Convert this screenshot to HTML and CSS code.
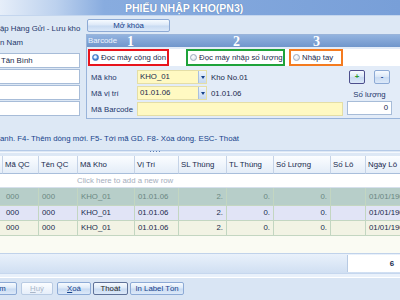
FILE: index.html
```html
<!DOCTYPE html>
<html lang="vi">
<head>
    <meta charset="UTF-8">
    <meta name="viewport" content="width=device-width, initial-scale=1.0">
    <title>Phiếu nhập kho</title>
    <link rel="stylesheet" href="styles.css">
</head>
<body>

    <div class="title">PHIẾU NHẬP KHO(PN3)</div>

    <div class="top">
        <div class="left">
            <div class="lbl">ập Hàng Gửi - Lưu kho</div>
            <div class="lbl">n Nam</div>
            <div class="box">Tân Bình</div>
            <div class="box"></div>
            <div class="box"></div>
            <div class="box"></div>
        </div>

        <div class="right">
            <div class="btn unlock">Mở khóa</div>
            <div class="group">
                <div class="group-head">
                    <span class="cap">Barcode</span>
                    <span class="num n1">1</span>
                    <span class="num n2">2</span>
                    <span class="num">3</span>
                </div>
                <div class="modes">
                    <div class="mode red"><i class="radio on"></i>Đọc máy cộng dồn</div>
                    <div class="mode green"><i class="radio"></i>Đọc máy nhập số lượng</div>
                    <div class="mode orange"><i class="radio"></i>Nhập tay</div>
                </div>
                <div class="body">
                    <div class="fields">
                        <div class="row">
                            <span class="rl">Mã kho</span>
                            <div class="combo"><span>KHO_01</span><i class="drop"></i></div>
                            <span class="desc">Kho No.01</span>
                        </div>
                        <div class="row">
                            <span class="rl">Mã vị trí</span>
                            <div class="combo"><span>01.01.06</span><i class="drop"></i></div>
                            <span class="desc">01.01.06</span>
                        </div>
                        <div class="row">
                            <span class="rl">Mã Barcode</span>
                            <div class="yellow"></div>
                        </div>
                    </div>
                    <div class="qty">
                        <div class="pm">
                            <div class="btn sq plus">+</div>
                            <div class="btn sq">-</div>
                        </div>
                        <div class="ql">Số lượng</div>
                        <div class="qbox">0</div>
                    </div>
                </div>
            </div>
        </div>
    </div>

    <div class="hint">anh. F4- Thêm dòng mới. F5- Tới mã GD. F8- Xóa dòng. ESC- Thoát</div>

    <div class="split"><span class="grip"></span></div>

    <div class="grid">
        <div class="ghead">
            <div></div>
            <div>Mã QC</div>
            <div>Tên QC</div>
            <div>Mã Kho</div>
            <div>Vị Trí</div>
            <div>SL Thùng</div>
            <div>TL Thùng</div>
            <div>Số Lượng</div>
            <div>Số Lô</div>
            <div>Ngày Lô</div>
        </div>
        <div class="newrow">Click here to add a new row</div>
        <div class="grow sel">
            <div></div><div>000</div><div>000</div><div>KHO_01</div><div>01.01.06</div>
            <div class="n">2.</div><div class="n">0.</div><div class="n">0.</div><div></div><div>01/01/190</div>
        </div>
        <div class="grow alt">
            <div></div><div>000</div><div>000</div><div>KHO_01</div><div>01.01.06</div>
            <div class="n">2.</div><div class="n">0.</div><div class="n">0.</div><div></div><div>01/01/190</div>
        </div>
        <div class="grow even">
            <div></div><div>000</div><div>000</div><div>KHO_01</div><div>01.01.06</div>
            <div class="n">2.</div><div class="n">0.</div><div class="n">0.</div><div></div><div>01/01/190</div>
        </div>
    </div>

    <div class="sum"><div class="total">6</div></div>

    <div class="bar">
        <div class="btn tb first">Tìm</div>
        <div class="btn tb off"><u>H</u>uỷ</div>
        <div class="btn tb"><u>X</u>oá</div>
        <div class="btn tb focus">Thoát</div>
        <div class="btn tb">In Label Tồn</div>
    </div>

</body>
</html>
```

FILE: styles.css
```css
* { box-sizing: border-box; }
html, body { margin: 0; padding: 0; }
body { width: 400px; height: 300px; overflow: hidden; background: #dde8f5; font-family: "Liberation Sans", Arial, sans-serif; font-size: 7.8px; color: #172a4c; }

.title { height: 16px; padding-left: 125px; line-height: 16px; font-size: 10.5px; font-weight: bold; color: #fff; white-space: nowrap; background: linear-gradient(90deg, #e6eef9 0, #bcd1ee 14%, #88acdf 26%, #789fd8 100%); text-shadow: 0 0 1px #4a70a8; border-bottom: 1px solid #c4d6ee; }

.top { display: flex; gap: 6px; height: 103px; }
.left { flex: none; width: 80px; padding-top: 6px; }
.lbl { line-height: 14px; white-space: nowrap; color: #1c366a; }
.box { width: 82px; height: 15px; margin: 0 0 1px -2px; padding-left: 2px; line-height: 13px; background: #fff; border: 1px solid #a7bcd8; }
.lbl + .box { margin-top: 3px; }

.right { flex: none; width: 330px; }
.btn { border: 1px solid #8daad5; border-radius: 2px; background: linear-gradient(#f7fbff, #dde9f8 45%, #c9dbf2 55%, #dce9f9); color: #15428b; text-align: center; white-space: nowrap; }
.unlock { width: 83px; height: 13px; margin: 3px 0 0 1px; line-height: 11px; }

.group { height: 85px; margin-top: 2px; border: 1px solid #99b4da; background: #e3ecf8; }
.group-head { display: flex; height: 12px; line-height: 12px; background: linear-gradient(#93b3df, #7096cc); color: #eef4fc; }
.cap { width: 40px; padding-left: 1px; }
.num { font-family: "Liberation Serif", serif; font-weight: bold; font-size: 14px; line-height: 13px; color: #fff; }
.n1 { width: 106px; }
.n2 { width: 80px; }

.modes { display: flex; height: 17px; margin: 2px 0 0 1px; background: #fff; }
.mode { display: flex; align-items: center; gap: 2px; height: 17px; padding-left: 2px; border: 2px solid; white-space: nowrap; }
.red { width: 81px; border-color: #e8141c; }
.green { width: 99px; margin-left: 17px; border-color: #1fa33a; }
.orange { width: 54px; margin-left: 4px; border-color: #f47b20; }
.radio { flex: none; width: 7px; height: 7px; border-radius: 50%; border: 1px solid #9aa9bd; background: radial-gradient(circle at 40% 35%, #fff, #d3dbe6); }
.radio.on { border-color: #3f78c4; background: radial-gradient(circle at 45% 40%, #eaf4ff 0 25%, #4d8fdc 55%, #2a62b0); }

.body { display: flex; margin-top: 4px; }
.fields { display: flex; flex-direction: column; gap: 2px; width: 259px; }
.row { display: flex; align-items: center; height: 14px; }
.rl { width: 50px; padding-left: 4px; color: #1c366a; white-space: nowrap; }
.combo { display: flex; width: 70px; height: 14px; background: #fff9c2; border: 1px solid #e4dea6; }
.combo span { flex: 1; padding-left: 2px; line-height: 12px; }
.drop { display: flex; align-items: center; justify-content: center; width: 8px; background: linear-gradient(#edf4fd, #c5d8f1); border-left: 1px solid #a9c0df; }
.drop::after { content: ""; border-top: 3px solid #15428b; border-left: 2px solid transparent; border-right: 2px solid transparent; }
.desc { padding-left: 4px; white-space: nowrap; }
.yellow { width: 206px; height: 14px; background: #fff9c2; border: 1px solid #e4dea6; }

.qty { width: 45px; margin-left: 1px; }
.pm { display: flex; gap: 9px; padding-left: 2px; }
.sq { width: 16px; height: 14px; line-height: 12px; font-weight: bold; }
.plus { border-color: #4d4f8d; color: #2c9a2c; }
.ql { height: 17px; padding-top: 5px; line-height: 12px; text-align: center; color: #1c366a; white-space: nowrap; }
.qbox { height: 14px; padding-right: 3px; line-height: 12px; text-align: right; background: #fff; border: 1px solid #a7bcd8; }

.hint { margin-top: 14px; line-height: 12px; color: #15428b; white-space: nowrap; }

.split { height: 3px; margin: 5px 0 3px; border-top: 1px solid #b5cae7; border-bottom: 1px solid #f4f8fd; }
.grip { display: block; width: 12px; height: 1px; margin-left: 150px; background: repeating-linear-gradient(90deg, #5d7fb5 0 1px, transparent 1px 3px); }

.grid { height: 97px; background: #fafbf3; }
.ghead, .grow { display: grid; grid-template-columns: 3px 36px 39px 57px 44px 48px 47px 57px 35px 60px; }
.ghead div { height: 18px; padding-left: 2px; line-height: 17px; white-space: nowrap; overflow: hidden; border-right: 1px solid #c5d3e7; border-bottom: 1px solid #a8bedb; background: linear-gradient(#fbfdff, #e4edf8); color: #15284b; }
.newrow { height: 14px; padding-left: 77px; line-height: 13px; background: #fff; border-bottom: 1px solid #d6e0ec; color: #a5aebd; }
.grow div { height: 15px; padding: 0 3px; line-height: 14px; white-space: nowrap; overflow: hidden; border-right: 1px solid #c3d6c1; border-bottom: 1px solid #c3d6c1; }
.grow .n { text-align: right; }
.grow.sel div { height: 18px; line-height: 17px; background: #b7cec9; color: #6a8782; }
.grow.alt div { background: #e1e4f6; }
.grow.even div { background: #f2f3e4; }

.sum { display: flex; justify-content: flex-end; height: 20px; border-top: 1px solid #c0d2ea; background: linear-gradient(#e9f1fb, #d0dff2); }
.total { width: 53px; margin: 1px 0; padding-right: 6px; line-height: 17px; text-align: right; font-weight: bold; background: #fff; border-left: 1px solid #b7cae3; }

.bar { display: flex; height: 27px; padding-top: 8px; background: linear-gradient(#e9f1fb 0 3px, #fff 3px 4px, #d9e5f4 4px); border-top: 1px solid #c6d7ee; }
.tb { height: 13px; line-height: 11px; margin-right: 2px; }
.first { width: 36px; margin-left: -19px; margin-right: 4px; }
.off { width: 32px; margin-right: 4px; color: #a9b6c8; border-color: #b9cbe3; background: linear-gradient(#fbfdff, #e6eefa); }
.tb:nth-child(3) { width: 34px; }
.focus { width: 35px; color: #1c1c1c; border-color: #5f7299; }
.tb:last-child { width: 54px; }
```
